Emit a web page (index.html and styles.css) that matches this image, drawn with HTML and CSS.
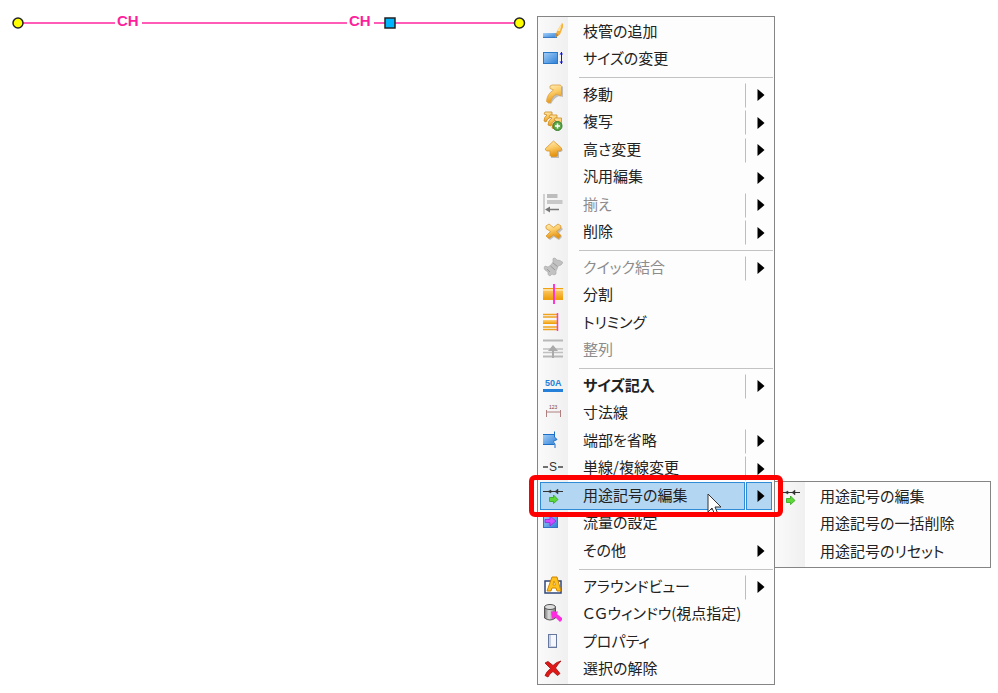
FILE: index.html
```html
<!DOCTYPE html>
<html lang="ja">
<head>
	<meta charset="UTF-8">
	<title>用途記号の編集</title>
	<link rel="stylesheet" href="styles.css">
</head>
<body>
	<svg class="defs" width="0" height="0" aria-hidden="true">
		<defs>
			<linearGradient id="gold" x1="0" y1="0" x2="0.3" y2="1">
				<stop offset="0" stop-color="#fff0c0" />
				<stop offset="0.5" stop-color="#fbcb66" />
				<stop offset="1" stop-color="#e59412" />
			</linearGradient>
			<linearGradient id="bar" x1="0" y1="0" x2="0" y2="1">
				<stop offset="0" stop-color="#ffd27a" />
				<stop offset="1" stop-color="#ee9a00" />
			</linearGradient>
			<linearGradient id="blue" x1="0" y1="0" x2="1" y2="1">
				<stop offset="0" stop-color="#a4cff8" />
				<stop offset="1" stop-color="#2d7fd6" />
			</linearGradient>
			<linearGradient id="metal" x1="0" y1="0" x2="1" y2="0">
				<stop offset="0" stop-color="#777" />
				<stop offset="0.4" stop-color="#ddd" />
				<stop offset="1" stop-color="#777" />
			</linearGradient>
		</defs>
		<symbol id="i-usage" viewBox="0 0 20 20">
			<path d="M0 6.500H20" stroke="#333" stroke-width="1" />
			<path d="M5 6.500L8 5V8ZM12 6.500L15 4V9Z" fill="#333" stroke="#333" stroke-width="0.500" />
			<path d="M6.500 12.500H10.500V10L15 14.500L10.500 18.500V16.500H6.500Z" fill="#5ed838" stroke="#2fa51a" stroke-width="0.800" />
		</symbol>
		<symbol id="i-arrow" viewBox="0 0 8 12">
			<path d="M0.500 0L7.500 6L0.500 12Z" fill="#000" />
		</symbol>
	</svg>

	<main class="canvas">
		<!-- 配管 -->
		<svg class="pipe" width="540" height="44">
			<g fill="#ff5cb8">
				<rect x="18" y="22" width="97" height="2" />
				<rect x="142" y="22" width="205" height="2" />
				<rect x="374" y="22" width="145" height="2" />
			</g>
			<text x="117" y="26">CH</text>
			<text x="349" y="26">CH</text>
			<circle cx="18" cy="23" r="5" fill="#ff0" stroke="#222" stroke-width="1.500" />
			<circle cx="519.500" cy="23" r="5" fill="#ff0" stroke="#222" stroke-width="1.500" />
			<rect x="385" y="18" width="10" height="10" fill="#00b4ff" stroke="#222" stroke-width="1.500" />
		</svg>

		<nav class="menu main-menu">
			<ul>
				<li>
					<button class="item">
						<svg viewBox="0 0 20 20"><rect x="0" y="12" width="14" height="5" fill="url(#blue)" /><path d="M0 16.500H14" stroke="#3b7cc4" /><path d="M12 16.500L14 10L19 2L20 3V6L17 13.500Z" fill="#f4b13c" /><path d="M14 10L19 2L17 10Z" fill="#ffe3a0" /><path d="M12 16.500L13.500 12L15.500 14.500Z" fill="#b98540" /></svg>
						<span>枝管の追加</span>
					</button>
				</li>
				<li>
					<button class="item">
						<svg viewBox="0 0 20 20"><rect x="0.500" y="4.500" width="14" height="11" fill="url(#blue)" stroke="#2a78c8" /><path d="M18.500 4V16" stroke="#1414e6" /><path d="M16.500 6.500L18.500 4L20 6.500ZM16.500 13.500L18.500 16L20 13.500Z" fill="#1414e6" /></svg>
						<span>サイズの変更</span>
					</button>
				</li>
			</ul>
			<hr>
			<ul>
				<li>
					<button class="item">
						<svg viewBox="0 0 20 20"><path d="M5 19Q6 12 13 8L20 2V13L16 12Q11 14 8 20Z" fill="#999" opacity="0.600" /><path d="M3.500 17.500Q4 10 10.500 6L7 4.500V2L9 1H17.500L18.500 2.500V11L17 12L14 10Q9 12 7.500 18.500L5.500 19Z" fill="url(#gold)" stroke="#dca044" stroke-width="0.800" /></svg>
						<span>移動</span>
					</button>
					<button class="drop split" aria-label="移動のメニュー"><svg><use href="#i-arrow" /></svg></button>
				</li>
				<li>
					<button class="item">
						<svg viewBox="0 0 20 20"><g fill="url(#gold)" stroke="#cf8a22" stroke-width="0.800"><path d="M1 10Q1 6 4 4L1 3L2 1H9V7L7 6.500Q4 8 3 11Z" /><path d="M5 14Q5 9 9 7L6 6L7 4H14V10L12 9.500Q9 11 8 15Z" /><path d="M9 17Q9 12 13 10L11 9L12 7H18.500V13L16 12.500Q13 14 12 18Z" /></g><circle cx="14.500" cy="15" r="4.500" fill="#5ea84a" stroke="#377d2c" /><path d="M14.500 12.500V17.500M12 15H17" stroke="#fff" stroke-width="1.500" /></svg>
						<span>複写</span>
					</button>
					<button class="drop split" aria-label="複写のメニュー"><svg><use href="#i-arrow" /></svg></button>
				</li>
				<li>
					<button class="item">
						<svg viewBox="0 0 20 20"><path d="M12 4L20 11L18 13H16V19H8V12Z" fill="#999" opacity="0.600" /><path d="M10.500 2L18.500 9V11L17 12H14.500V16.500L13.500 17.500H8L7 16.500V12H4L2.500 11V9.500Z" fill="url(#gold)" stroke="#d9962c" stroke-width="0.800" /></svg>
						<span>高さ変更</span>
					</button>
					<button class="drop split" aria-label="高さ変更のメニュー"><svg><use href="#i-arrow" /></svg></button>
				</li>
				<li>
					<button class="item"><svg></svg><span>汎用編集</span></button>
					<button class="drop" aria-label="汎用編集のメニュー"><svg><use href="#i-arrow" /></svg></button>
				</li>
				<li>
					<button class="item" disabled>
						<svg viewBox="0 0 20 20"><path d="M1 0V20" stroke="#c4c4c4" stroke-width="1.500" /><rect x="4" y="0" width="10.500" height="4" fill="#bdbdbd" /><rect x="4" y="6" width="15.500" height="4" fill="#c8c8c8" /><path d="M6 15.500H16" stroke="#777" stroke-width="1.500" /><path d="M2 15.500L7 12.500V18.500Z" fill="#777" /></svg>
						<span>揃え</span>
					</button>
					<button class="drop split" aria-label="揃えのメニュー"><svg><use href="#i-arrow" /></svg></button>
				</li>
				<li>
					<button class="item">
						<svg viewBox="0 0 20 20"><path d="M6 6L12 8L17 5L20 8L16 12L19 16L16 19L11 16L7 19L4 16L8 11Z" fill="#999" opacity="0.600" /><path d="M3 5L6 3L10.500 6.500L15 3L18 5L17.500 7.500L13.500 10.500L18 14.500L15.500 17.500L10.500 14L6 17.500L3 15L7.500 10.500L3 7.500Z" fill="url(#gold)" stroke="#d9962c" stroke-width="0.800" stroke-linejoin="round" /></svg>
						<span>削除</span>
					</button>
					<button class="drop split" aria-label="削除のメニュー"><svg><use href="#i-arrow" /></svg></button>
				</li>
			</ul>
			<hr>
			<ul>
				<li>
					<button class="item" disabled>
						<svg viewBox="0 0 20 20"><path d="M2 9L5 10L8 8L10 5V1.500L12 1L14 3L17 3.500L20 5.500L18 8L15 9L14 12L13 14V17L11 18L9 17L7 19L5 17.500V15L2 13L1 11Z" fill="#c2c2c2" stroke="#a5a5a5" stroke-width="0.600" /><path d="M7.500 9L12 13M10 6L14.500 9.500M4 12L7 15" stroke="#999" /></svg>
						<span>クイック結合</span>
					</button>
					<button class="drop split" aria-label="クイック結合のメニュー"><svg><use href="#i-arrow" /></svg></button>
				</li>
				<li>
					<button class="item">
						<svg viewBox="0 0 20 20"><rect x="0" y="4" width="20" height="12" fill="url(#bar)" /><path d="M0 4.500H20M0 15.500H20" stroke="#f0a010" /><path d="M0 6H20" stroke="#fff3cf" /><path d="M11 0V20" stroke="#ff35d5" stroke-width="2" /></svg>
						<span>分割</span>
					</button>
				</li>
				<li>
					<button class="item">
						<svg viewBox="0 0 20 20"><path d="M0 2.500H14M0 5H14M0 15H14M0 17.500H14" stroke="#efa31d" stroke-width="1.500" /><rect x="0" y="8" width="14" height="4" fill="url(#bar)" /><path d="M14.500 1V19" stroke="#ff35d5" stroke-width="1.500" /></svg>
						<span>トリミング</span>
					</button>
				</li>
				<li>
					<button class="item" disabled>
						<svg viewBox="0 0 20 20"><path d="M0 1.500H20" stroke="#b8b8b8" stroke-width="2" /><path d="M0 10H20M0 13.500H20" stroke="#c0c0c0" stroke-width="1.500" /><path d="M0 17.500H20" stroke="#b8b8b8" stroke-width="2" /><path d="M10 19V7" stroke="#aaa" stroke-width="2" /><path d="M5 12L10 6L15 12Z" fill="#aaa" /></svg>
						<span>整列</span>
					</button>
				</li>
			</ul>
			<hr>
			<ul>
				<li>
					<button class="item strong">
						<svg viewBox="0 0 20 20"><text class="size-mark" x="2" y="11">50A</text><rect x="0" y="14" width="20" height="3" fill="#2480d8" /></svg>
						<span>サイズ記入</span>
					</button>
					<button class="drop split" aria-label="サイズ記入のメニュー"><svg><use href="#i-arrow" /></svg></button>
				</li>
				<li>
					<button class="item">
						<svg viewBox="0 0 20 20"><text class="dim-mark" x="6" y="7">123</text><path d="M3.500 8V15M17.500 8V15M3.500 10H17.500" stroke="#b08080" fill="none" /></svg>
						<span>寸法線</span>
					</button>
				</li>
				<li>
					<button class="item">
						<svg viewBox="0 0 20 20"><path d="M0 4H11.500V7L14 9.500L9.500 11.500L12 15H0Z" fill="url(#blue)" /><path d="M0 4.500H11M0 14.500H11M11.500 1.500V7L14 9.500L10 11.500L12 14V18" stroke="#1c6fc6" fill="none" /></svg>
						<span>端部を省略</span>
					</button>
					<button class="drop split" aria-label="端部を省略のメニュー"><svg><use href="#i-arrow" /></svg></button>
				</li>
				<li>
					<button class="item">
						<svg viewBox="0 0 20 20"><path d="M0 10H5M15 10H20" stroke="#444" stroke-width="1.500" /><text class="s-mark" x="6" y="14">S</text></svg>
						<span>単線/複線変更</span>
					</button>
					<button class="drop split" aria-label="単線/複線変更のメニュー"><svg><use href="#i-arrow" /></svg></button>
				</li>
				<li class="active">
					<button class="item"><svg><use href="#i-usage" /></svg><span>用途記号の編集</span></button>
					<button class="drop split" aria-label="用途記号の編集のメニュー"><svg><use href="#i-arrow" /></svg></button>
					<div class="menu sub-menu">
						<ul>
							<li><button class="item"><svg><use href="#i-usage" /></svg><span>用途記号の編集</span></button></li>
							<li><button class="item"><svg></svg><span>用途記号の一括削除</span></button></li>
							<li><button class="item"><svg></svg><span>用途記号のリセット</span></button></li>
						</ul>
					</div>
					<svg class="cursor" viewBox="0 0 16 24"><path d="M1 1V19L5 15L8 22L11 21L8 14H14Z" fill="#fff" stroke="#333" /></svg>
				</li>
				<li>
					<button class="item">
						<svg viewBox="0 0 20 20"><rect x="0.500" y="2.500" width="14" height="13" fill="url(#blue)" stroke="#3672c9" /><path d="M2 7.500H7V4L13 9L7 14V10.500H2Z" fill="#d34cff" stroke="#8b2be0" stroke-width="0.800" /></svg>
						<span>流量の設定</span>
					</button>
				</li>
				<li>
					<button class="item"><svg></svg><span>その他</span></button>
					<button class="drop" aria-label="その他のメニュー"><svg><use href="#i-arrow" /></svg></button>
				</li>
			</ul>
			<hr>
			<ul>
				<li>
					<button class="item">
						<svg viewBox="0 0 20 20"><rect x="2" y="5" width="16" height="12" fill="#fff" stroke="#2f4778" stroke-width="1.500" /><path d="M4 15L9 1H14L18 15H14L13 12H9L8 15Z" fill="#ffc11f" stroke="#cf8400" /><path d="M11 5L10 9H12.500Z" fill="#fff" stroke="#cf8400" stroke-width="0.800" /></svg>
						<span>アラウンドビュー</span>
					</button>
					<button class="drop split" aria-label="アラウンドビューのメニュー"><svg><use href="#i-arrow" /></svg></button>
				</li>
				<li>
					<button class="item">
						<svg viewBox="0 0 20 20"><path d="M1.500 4V15Q7 19 12.500 15V4Z" fill="url(#metal)" stroke="#555" /><ellipse cx="7" cy="4" rx="5.500" ry="2.500" fill="#ddd" stroke="#555" /><path d="M8 8.500H15L14 11L19 15V17L17 19L12 14L9 16Z" fill="#ff2be0" /></svg>
						<span>ＣＧウィンドウ(視点指定)</span>
					</button>
				</li>
				<li>
					<button class="item">
						<svg viewBox="0 0 20 20"><rect x="5" y="3" width="9" height="14" fill="#c7cede" /><rect x="8" y="4" width="5" height="11" fill="#f5f7fc" /><path d="M5.500 3V16.500M5 16.500H14M13.500 3V16M5 3.500H14" stroke="#66789e" fill="none" /></svg>
						<span>プロパティ</span>
					</button>
				</li>
				<li>
					<button class="item">
						<svg viewBox="0 0 20 20"><path d="M2 5L5 3.500L10 7.500Q13 4 18 3Q15 6 12.500 10L17 15.500L14.500 17.500L10 13.500Q7 15 5 19L2 17.500Q4 13 7.500 10.500Z" fill="#df1818" stroke="#a40c0c" stroke-width="0.800" /></svg>
						<span>選択の解除</span>
					</button>
				</li>
			</ul>
		</nav>
	</main>
</body>
</html>
```
FILE: styles.css
```css
body {
	margin: 0;
	background-color: #fff;
	font-family: "Liberation Sans", "Noto Sans CJK JP", sans-serif;
	font-size: 15px;
	color: #222;
}
.defs {
	position: absolute;
}
.canvas {
	position: relative;
	min-height: 100vh;
}
.pipe {
	display: block;
}
.pipe text {
	font-size: 15px;
	font-weight: bold;
	fill: #ff1f9c;
}

/* メニュー */
.menu {
	position: absolute;
	box-sizing: border-box;
	padding: 1px 0;
	border: 1px solid #858585;
	background: linear-gradient(to right, #fafafa, #f0f0f0) no-repeat #fdfdfd;
	background-size: 30px 100%;
}
.main-menu {
	top: 16px;
	left: 537px;
	width: 238px;
}
.sub-menu {
	top: -1px;
	left: 100%;
	width: 217px;
}
.menu ul {
	margin: 0;
	padding: 0;
	list-style: none;
}
.menu li {
	position: relative;
	display: flex;
	align-items: center;
	height: 28px;
	padding: 0 2px;
}
.menu li:nth-child(even) {
	height: 27px;
}
.menu hr {
	height: 1px;
	margin: 4px 1px 3px 41px;
	border: none;
	background-color: #c3c3c3;
}

.item,
.drop {
	box-sizing: border-box;
	display: flex;
	align-items: center;
	height: 100%;
	padding: 0;
	border: 1px solid transparent;
	background: none;
	color: inherit;
}
.item {
	flex: 1;
	gap: 20px;
	padding: 0 0 3px 2px;
	font-family: "Noto Sans CJK JP", sans-serif;
	font-size: 15px;
	font-feature-settings: "palt";
	line-height: 20px;
	text-align: left;
	white-space: nowrap;
}
.item svg {
	flex: none;
	width: 20px;
	height: 20px;
}
.item:disabled {
	color: #8c8c8c;
}
.strong {
	font-weight: bold;
}
.drop {
	justify-content: center;
	width: 27px;
	padding-left: 4px;
}
.drop svg {
	width: 8px;
	height: 12px;
}
.split {
	height: 25px;
	border-left-color: #bdbdbd;
}

/* 選択中の項目 */
.active > .item,
.active > .drop {
	height: 100%;
	border-color: #2f8ad8;
	background-color: #b3d7f3;
}
.active > .drop {
	width: 26px;
	margin-left: 1px;
}
.active::after {
	content: "";
	position: absolute;
	inset: -7px -9px;
	z-index: 3;
	border: 5px solid #f00;
	border-radius: 6px;
	pointer-events: none;
}
.active {
	z-index: 1;
}
.cursor {
	position: absolute;
	top: 11px;
	left: 169px;
	z-index: 2;
	width: 16px;
	height: 24px;
}

/* アイコン内の文字 */
.item text {
	font-family: "Liberation Sans", sans-serif;
}
.item .size-mark {
	font-size: 9px;
	font-weight: bold;
	fill: #2480d8;
}
.item .dim-mark {
	font-size: 5px;
	fill: #7c4545;
}
.item .s-mark {
	font-size: 12px;
	fill: #333;
}
```
